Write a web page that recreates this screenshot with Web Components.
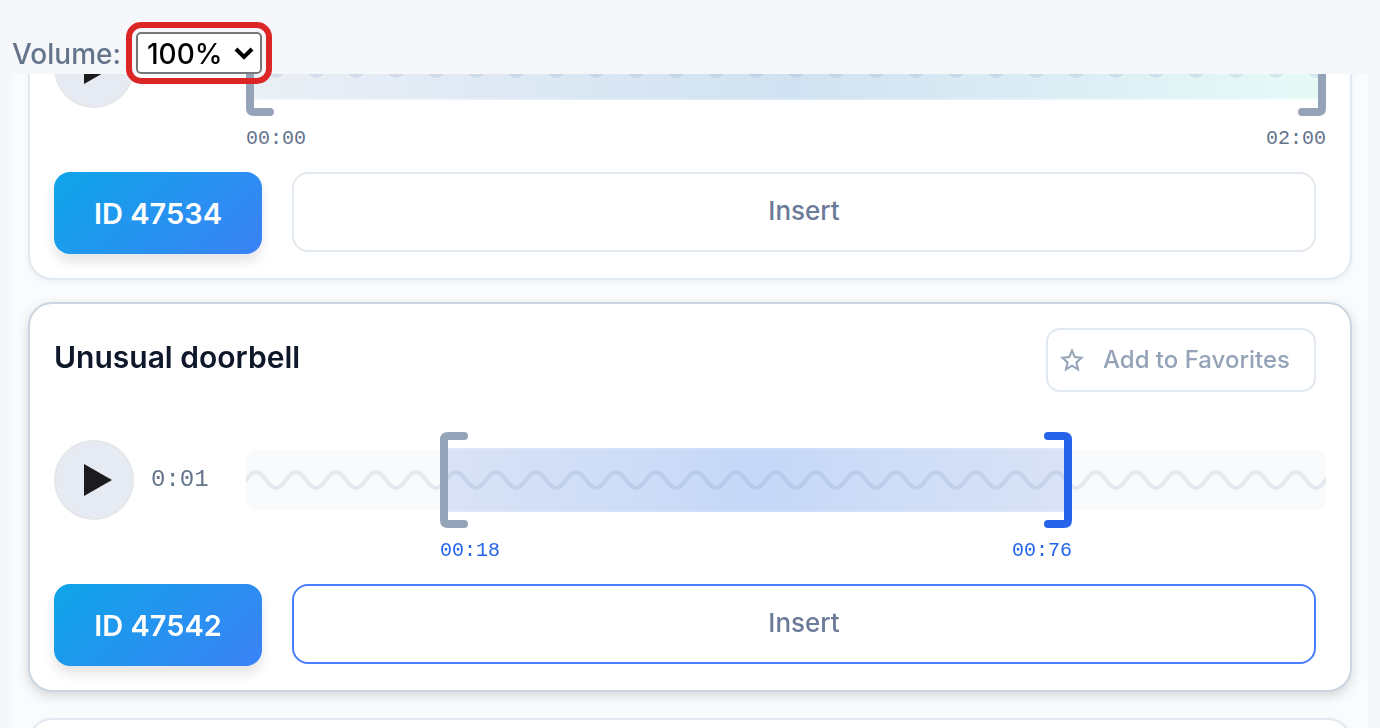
<!DOCTYPE html>
<html lang="en">
<head>
<meta charset="utf-8">
<meta name="viewport" content="width=device-width, initial-scale=1">
<title>Sound library</title>
<style>
html, body { margin: 0; height: 100%; }
body { background: #f5f7fb; color: #0f172a; font-family: Inter, "Liberation Sans", sans-serif; overflow: hidden; }
</style>
</head>
<body>
<sound-app>
  <volume-bar slot="bar"></volume-bar>
  <sound-card sound-id="47534" from="0" to="1080" from-label="00:00" to-label="02:00"></sound-card>
  <sound-card class="current" sound-id="47542" time="0:01" from="194" to="826" from-label="00:18" to-label="00:76">Unusual doorbell</sound-card>
  <sound-card class="blank"></sound-card>
</sound-app>
<script>
const attach = (host, html) => {
  const t = document.createElement('template');
  t.innerHTML = html;
  const root = host.attachShadow({ mode: 'open' });
  root.append(t.content.cloneNode(true));
  return root;
};

customElements.define('volume-bar', class extends HTMLElement {
  connectedCallback() {
    if (this.shadowRoot) return;
    attach(this, `
<style>
:host { display: flex; align-items: center; gap: 15px; padding: 32px 12px 0; position: relative; z-index: 2; }
label { font-size: 28px; line-height: 40px; padding-top: 2px; font-weight: 500; color: #64748b; }
.box { display: grid; align-items: center; }
.box > * { grid-area: 1 / 1; }
select { appearance: none; box-sizing: border-box; width: 126px; height: 42px; margin: 0; padding: 2px 10px 0 9px;
  border: 2px solid #767676; border-radius: 5px; background: #fff; color: #000;
  font: 500 28px/36px Inter, "Liberation Sans", sans-serif; outline: 6px solid #dc2626; outline-offset: 4px; }
svg { justify-self: end; margin-right: 8px; pointer-events: none; }
</style>
<label for="v">Volume:</label>
<span class="box">
  <select id="v"><option>100%</option></select>
  <svg width="20" height="14" viewBox="0 0 20 14"><path d="M2 3l8 8 8-8" fill="none" stroke="#000" stroke-width="4"/></svg>
</span>`);
  }
});

customElements.define('range-track', class extends HTMLElement {
  connectedCallback() {
    if (this.shadowRoot) return;
    const a = +this.getAttribute('from'), b = +this.getAttribute('to');
    const bracket = '<svg width="28" height="96" aria-hidden="true"><path d="M8 0H24A4 4 0 0 1 24 8H8V88H24A4 4 0 0 1 24 96H8Q0 96 0 88V8Q0 0 8 0Z" fill="currentColor"/></svg>';
    attach(this, `
<style>
:host { display: grid; grid-template-columns: ${a}fr ${b - a}fr ${1080 - b}fr; grid-template-rows: 96px 46px; }
.wave { grid-area: 1 / 1 / 2 / 4; align-self: center; width: 100%; height: 60px; display: block; border-radius: 10px; background: #f8fafc; }
.sel { grid-area: 1 / 2; position: relative; display: flex; justify-content: space-between; }
.fill { position: absolute; inset: 16px 8px; background: var(--fill); mix-blend-mode: multiply; }
.h { position: relative; width: 28px; }
.h svg { display: block; }
.r svg { transform: scaleX(-1); }
.l { color: #94a3b8; }
.r { color: var(--handle, #94a3b8); }
.times { grid-area: 2 / 2; display: flex; justify-content: space-between; font: 400 20px/46px "Liberation Mono", monospace; color: var(--times, #64748b); }
</style>
<svg class="wave" aria-hidden="true">
  <defs><pattern id="w" width="40" height="60" patternUnits="userSpaceOnUse">
    <path d="M-10 38C-2 38 2 22 10 22S22 38 30 38 42 22 50 22" fill="none" stroke="#e4e9f0" stroke-width="4"/>
  </pattern></defs>
  <rect width="100%" height="60" fill="url(#w)"/>
</svg>
<div class="sel">
  <div class="fill"></div>
  <div class="h l">${bracket}</div>
  <div class="h r">${bracket}</div>
</div>
<div class="times"><span>${this.getAttribute('from-label')}</span><span>${this.getAttribute('to-label')}</span></div>`);
  }
});

customElements.define('sound-card', class extends HTMLElement {
  connectedCallback() {
    if (this.shadowRoot) return;
    const g = n => this.getAttribute(n) || '';
    const head = this.textContent.trim() ? `
<header><h2><slot></slot></h2>
<button class="fav" type="button"><svg width="24" height="24" viewBox="0 0 24 24" aria-hidden="true"><path d="M12 2.6L14.7 9.1L21.8 9.7L16.4 14.4L18 21.3L12 17.6L6 21.3L7.6 14.4L2.2 9.7L9.3 9.1Z" fill="none" stroke="currentColor" stroke-width="2"/></svg><span>Add to Favorites</span></button></header>` : '';
    const body = g('sound-id') ? `
<div class="player">
  <button class="play" type="button" aria-label="Play"><svg width="28" height="32" viewBox="0 0 28 32"><path d="M0 0L28 16L0 32Z" fill="#1c1c1f"/></svg></button>
  <span class="time">${g('time')}</span>
  <range-track from="${g('from')}" to="${g('to')}" from-label="${g('from-label')}" to-label="${g('to-label')}"></range-track>
</div>
<footer><button class="id" type="button">ID ${g('sound-id')}</button><button class="insert" type="button">Insert</button></footer>` : '';
    attach(this, `
<style>
:host { display: block; flex: none; box-sizing: border-box; padding: 24px; background: #fff; border: 2px solid #e2e8f0; border-radius: 24px; box-shadow: 0 2px 6px rgba(0,0,0,.05);
  --fill: linear-gradient(90deg, #f2f4f9, #d6e7f5 50%, #eefefa); }
:host(.current) { border-color: #cbd5e1; box-shadow: 0 4px 12px rgba(0,0,0,.15); transform: translateY(-2px);
  --fill: linear-gradient(90deg, #dfe7f9, #cbddfb 50%, #dfe7f9);
  --handle: #2563eb; --times: #2563eb; --insert-edge: #4a7dff; }
:host(.blank) { min-height: 326px; }
button { font-family: inherit; margin: 0; cursor: pointer; box-sizing: border-box; }
header { display: flex; justify-content: space-between; align-items: center; margin-right: 10px; }
h2 { margin: 0; font-size: 30px; line-height: 36px; font-weight: 600; padding-bottom: 6px; color: #0f172a; }
.fav { display: flex; align-items: center; gap: 19px; height: 64px; padding: 0 24px 0 12px; border: 2px solid #e2e8f0; border-radius: 14px; background: #fff; color: #94a3b8; font-size: 24px; line-height: 32px; font-weight: 500; }
.player { display: grid; grid-template-columns: 80px 78px 1fr; column-gap: 17px; align-items: start; }
header + .player { margin-top: 40px; }
.play { width: 80px; height: 80px; margin-top: 8px; padding: 0 0 0 8px; display: grid; place-items: center; border: 2px solid #e5e7eb; border-radius: 50%; background: #e6ebf3; }
.time { font: 400 24px/32px "Liberation Mono", monospace; color: #64748b; margin-top: 32px; }
footer { display: flex; align-items: flex-start; gap: 30px; margin: 10px 10px 0 0; }
.id { width: 208px; height: 82px; padding: 0; border: 0; border-radius: 16px; color: #fff; font-size: 29px; font-weight: 600; background: linear-gradient(135deg, #0ea5e9, #3b82f6); box-shadow: 0 8px 12px rgba(0,0,0,.1); }
.insert { flex: 1; height: 80px; padding: 0 0 4px; border: 2px solid var(--insert-edge, #e2e8f0); border-radius: 16px; background: #fff; color: #6b7a99; font-size: 26px; font-weight: 500; }
</style>${head}${body}`);
  }
});

customElements.define('sound-app', class extends HTMLElement {
  connectedCallback() {
    if (this.shadowRoot) return;
    const root = attach(this, `
<style>
:host { display: flex; flex-direction: column; height: 100vh; }
main { flex: 1; min-height: 0; margin: 0 12px; padding: 24px 16px; display: flex; flex-direction: column; gap: 24px; overflow-y: auto; scrollbar-width: none; background: #fafbfd; box-sizing: border-box; }
</style>
<slot name="bar"></slot><main><slot></slot></main>`);
    root.querySelector('main').scrollTop = 104;
  }
});
</script>
</body>
</html>
